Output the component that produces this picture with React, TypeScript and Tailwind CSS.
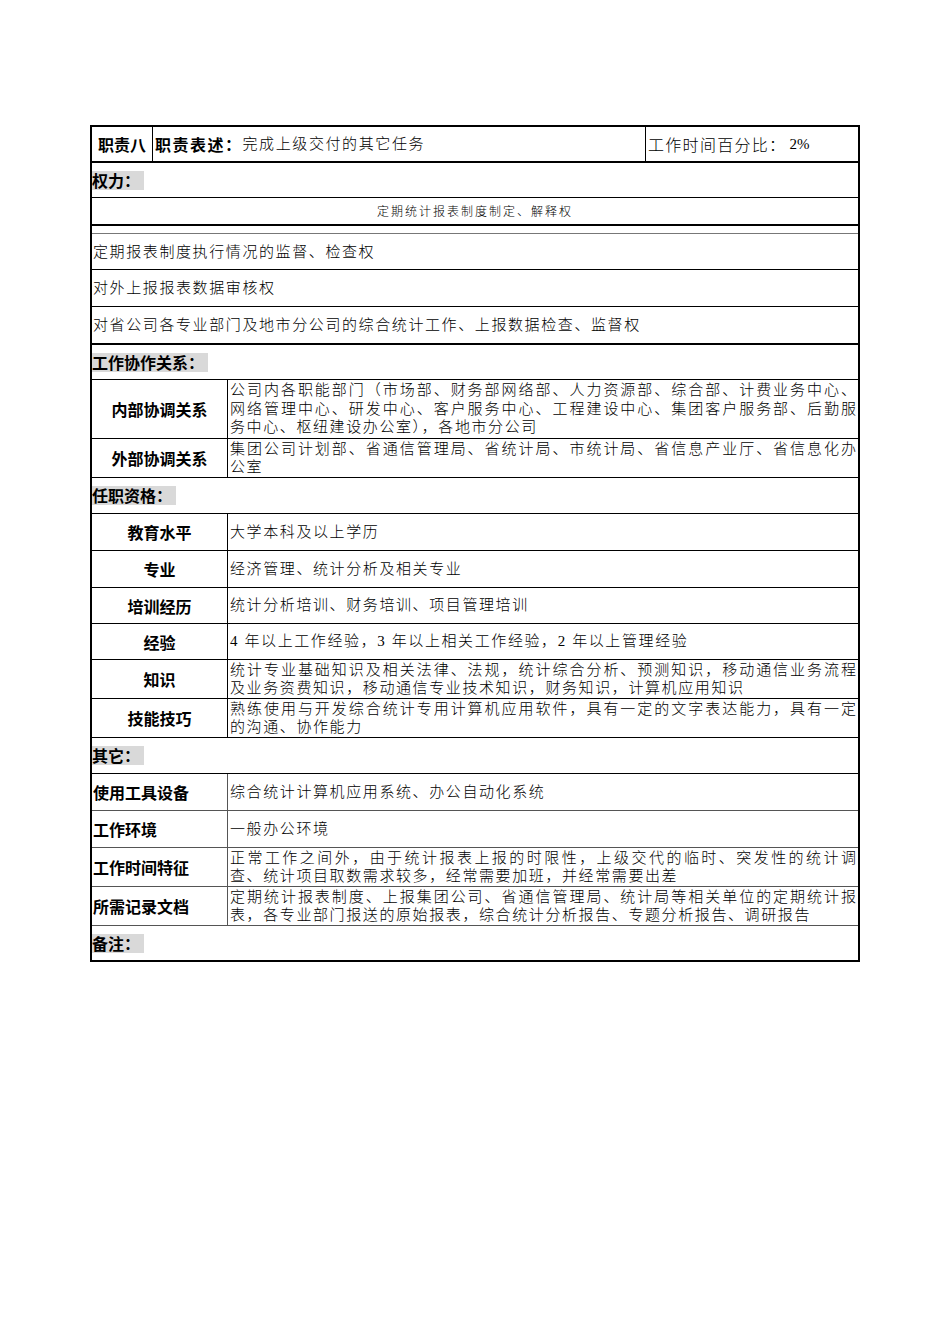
import type { ReactNode } from "react";

const body = "font-['Liberation_Serif','Noto_Sans_CJK_SC',serif] font-light text-[15px] tracking-[1.6px] text-black";
const bold = "font-['Noto_Sans_CJK_SC',sans-serif] font-bold text-[16px] text-black";

function SectionHead({ title, h }: { title: string; h: string }) {
  return (
    <div className={`flex items-center border-b border-black ${h}`}>
      <span className={`${bold} bg-[#d9d9d9] pr-[4px] leading-[19px]`}>{title}</span>
    </div>
  );
}

function PlainRow({ text, h, thick }: { text: string; h: string; thick?: boolean }) {
  return (
    <div className={`flex items-center pl-[1px] border-black ${thick ? "border-b-2" : "border-b"} ${h}`}>
      <span className={`${body} leading-[18px]`}>{text}</span>
    </div>
  );
}

function LabelRow({
  label,
  lines,
  h,
  left,
  line = "border-black",
}: {
  label: string;
  lines: string[];
  h: string;
  left?: boolean;
  line?: string;
}) {
  return (
    <div className={`flex border-b ${line} ${h}`}>
      <div
        className={`flex w-[136px] shrink-0 items-center border-r ${line} ${left ? "justify-start pl-[1px]" : "justify-center"}`}
      >
        <span className={`${bold} leading-[20px]`}>{label}</span>
      </div>
      <div className="flex min-w-0 flex-1 flex-col justify-center pl-[2px] pr-[2px]">
        {lines.map((l, i) => (
          <div
            key={i}
            className={`${body} leading-[18.5px] whitespace-pre ${
              i < lines.length - 1 ? "text-justify [text-align-last:justify] tracking-normal" : ""
            }`}
          >
            {l}
          </div>
        ))}
      </div>
    </div>
  );
}

function Cell({ children, className }: { children: ReactNode; className?: string }) {
  return <div className={`flex items-center ${className ?? ""}`}>{children}</div>;
}

export default function App() {
  return (
    <div className="min-h-[1344px] bg-white pl-[90px] pt-[125px]">
      <div className="w-[770px] border-2 border-black">
        {/* 职责八 */}
        <div className="flex h-[36px] border-b-2 border-black">
          <Cell className="w-[61px] shrink-0 justify-center border-r border-black">
            <span className={bold}>职责八</span>
          </Cell>
          <Cell className="w-[493px] shrink-0 border-r border-black pl-[2px]">
            <span className={`${bold} tracking-[1.5px]`}>职责表述：</span>
            <span className={body}>完成上级交付的其它任务</span>
          </Cell>
          <Cell className="flex-1 pl-[2px]">
            <span className="font-['Noto_Sans_CJK_SC',sans-serif] font-light text-[16px] tracking-[1.3px] text-black">
              工作时间百分比：
            </span>
            <span className="ml-[3px] font-['Liberation_Serif',serif] text-[15px] text-black">2%</span>
          </Cell>
        </div>

        <SectionHead title="权力：" h="h-[35px]" />
        <div className="flex h-[28px] items-center justify-center border-b-2 border-black">
          <span className="font-['Noto_Sans_CJK_SC',sans-serif] font-light text-[12px] tracking-[2px] text-black">
            定期统计报表制度制定、解释权
          </span>
        </div>
        <div className="h-[8px] border-b border-[#777]" />
        <PlainRow text="定期报表制度执行情况的监督、检查权" h="h-[36px]" />
        <PlainRow text="对外上报报表数据审核权" h="h-[37px]" />
        <PlainRow text="对省公司各专业部门及地市分公司的综合统计工作、上报数据检查、监督权" h="h-[38px]" thick />

        <SectionHead title="工作协作关系：" h="h-[35px]" />
        <LabelRow
          label="内部协调关系"
          h="h-[59px]"
          lines={[
            "公司内各职能部门（市场部、财务部网络部、人力资源部、综合部、计费业务中心、",
            "网络管理中心、研发中心、客户服务中心、工程建设中心、集团客户服务部、后勤服",
            "务中心、枢纽建设办公室），各地市分公司",
          ]}
        />
        <LabelRow
          label="外部协调关系"
          h="h-[39px]"
          lines={["集团公司计划部、省通信管理局、省统计局、市统计局、省信息产业厅、省信息化办", "公室"]}
        />

        <SectionHead title="任职资格：" h="h-[36px]" />
        <LabelRow label="教育水平" h="h-[37px]" lines={["大学本科及以上学历"]} />
        <LabelRow label="专业" h="h-[37px]" lines={["经济管理、统计分析及相关专业"]} />
        <LabelRow label="培训经历" h="h-[36px]" lines={["统计分析培训、财务培训、项目管理培训"]} />
        <LabelRow label="经验" h="h-[36px]" lines={["4 年以上工作经验，3 年以上相关工作经验，2 年以上管理经验"]} />
        <LabelRow
          label="知识"
          h="h-[39px]"
          lines={[
            "统计专业基础知识及相关法律、法规，统计综合分析、预测知识，移动通信业务流程",
            "及业务资费知识，移动通信专业技术知识，财务知识，计算机应用知识",
          ]}
        />
        <LabelRow
          label="技能技巧"
          h="h-[39px]"
          lines={["熟练使用与开发综合统计专用计算机应用软件，具有一定的文字表达能力，具有一定", "的沟通、协作能力"]}
        />

        <SectionHead title="其它：" h="h-[36px]" />
        <LabelRow label="使用工具设备" left line="border-[#555]" h="h-[37px]" lines={["综合统计计算机应用系统、办公自动化系统"]} />
        <LabelRow label="工作环境" left line="border-[#555]" h="h-[37px]" lines={["一般办公环境"]} />
        <LabelRow
          label="工作时间特征"
          left
          line="border-[#555]"
          h="h-[39px]"
          lines={["正常工作之间外，由于统计报表上报的时限性，上级交代的临时、突发性的统计调", "查、统计项目取数需求较多，经常需要加班，并经常需要出差"]}
        />
        <LabelRow
          label="所需记录文档"
          left
          line="border-[#555]"
          h="h-[39px]"
          lines={[
            "定期统计报表制度、上报集团公司、省通信管理局、统计局等相关单位的定期统计报",
            "表，各专业部门报送的原始报表，综合统计分析报告、专题分析报告、调研报告",
          ]}
        />

        <div className="flex h-[34px] items-center">
          <span className={`${bold} bg-[#d9d9d9] pr-[4px] leading-[19px]`}>备注：</span>
        </div>
      </div>
    </div>
  );
}
